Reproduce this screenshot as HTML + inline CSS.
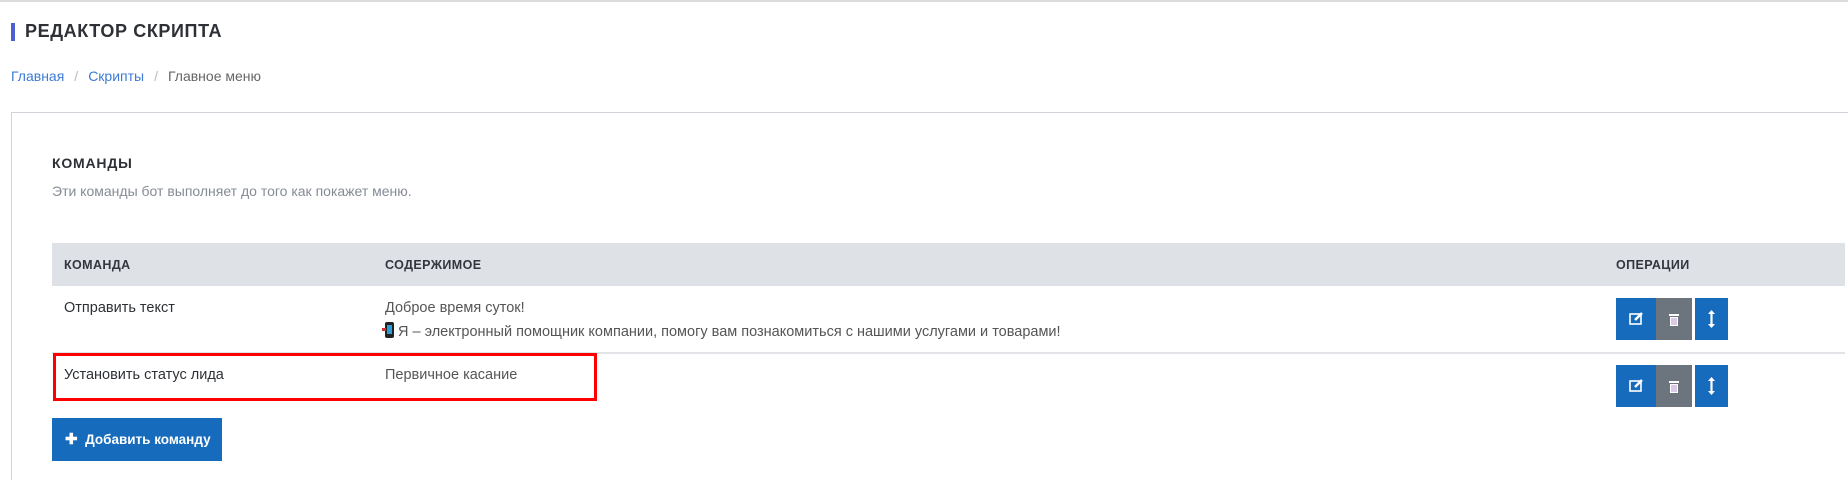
<!DOCTYPE html>
<html><head><meta charset="utf-8"><style>
*{margin:0;padding:0;box-sizing:border-box}
body{width:1848px;height:480px;overflow:hidden;background:#fff;font-family:"Liberation Sans",sans-serif;position:relative;color:#343a40}
.a{position:absolute;white-space:nowrap}
.btn{position:absolute;height:42px;top:0}
.sep{margin:0 10px;color:#bbb}
</style></head><body>
<div class="a" style="left:0;top:0;width:1848px;height:2px;background:#dcdcdc"></div>
<div class="a" style="left:11px;top:23px;width:4px;height:18px;background:#4a5fd0"></div>
<div class="a" style="left:25px;top:21px;font-size:18px;font-weight:bold;letter-spacing:0.6px;color:#2d3035">РЕДАКТОР СКРИПТА</div>
<div class="a" style="left:11px;top:68px;font-size:14px;color:#bbb"><span style="color:#3d7bd6">Главная</span><span class="sep">/</span><span style="color:#3d7bd6">Скрипты</span><span class="sep">/</span><span style="color:#666">Главное меню</span></div>
<div class="a" style="left:11px;top:112px;width:1837px;height:368px;border-left:1px solid #d0d4da;border-top:1px solid #d0d4da"></div>
<div class="a" style="left:52px;top:155px;font-size:14px;font-weight:bold;letter-spacing:0.8px;color:#2d3035">КОМАНДЫ</div>
<div class="a" style="left:52px;top:183px;font-size:14px;color:#858b95">Эти команды бот выполняет до того как покажет меню.</div>
<div class="a" style="left:52px;top:243px;width:1793px;height:43px;background:#dee1e5"></div>
<div class="a" style="left:64px;top:258px;font-size:12.5px;font-weight:bold;letter-spacing:0.4px;color:#33373d">КОМАНДА</div>
<div class="a" style="left:385px;top:258px;font-size:12.5px;font-weight:bold;letter-spacing:0.4px;color:#33373d">СОДЕРЖИМОЕ</div>
<div class="a" style="left:1616px;top:258px;font-size:12.5px;font-weight:bold;letter-spacing:0.4px;color:#33373d">ОПЕРАЦИИ</div>
<div class="a" style="left:64px;top:300px;font-size:14.5px;color:#2d3035">Отправить текст</div>
<div class="a" style="left:385px;top:300px;font-size:14.5px;color:#555">Доброе время суток!</div>
<div class="a" style="left:385px;top:322px;font-size:14.5px;color:#555"><span style="display:inline-block;width:9px;height:16px;background:#222;border-radius:2px;vertical-align:-2px;position:relative"><span style="position:absolute;left:2px;top:3px;width:5px;height:9px;background:#2a9fd8"></span><span style="position:absolute;left:-3px;top:6px;width:4px;height:3px;background:#c33"></span></span> Я – электронный помощник компании, помогу вам познакомиться с нашими услугами и товарами!</div>
<div class="a" style="left:52px;top:352px;width:1793px;height:2px;background:#e2e4e7"></div>
<div class="a" style="left:64px;top:367px;font-size:14.5px;color:#2d3035">Установить статус лида</div>
<div class="a" style="left:385px;top:367px;font-size:14.5px;color:#555">Первичное касание</div>
<div class="a" style="left:53px;top:353px;width:544px;height:48px;border:3px solid #f00"></div>
<div class="a" style="left:1616px;top:298px;width:112px;height:42px">
<div class="btn" style="left:0;width:40px;background:#176bbd"><svg width="40" height="42"><rect x="14" y="16" width="11" height="10" fill="none" stroke="#fff" stroke-width="1.6"/><path d="M19 22 L26 15" stroke="#fff" stroke-width="2.5"/></svg></div>
<div class="btn" style="left:40px;width:36px;background:#6c757d"><svg width="36" height="42"><rect x="13" y="16" width="10" height="2" fill="#fff"/><rect x="14" y="19" width="8" height="9" fill="#fff"/><path d="M16 20v7M18 20v7M20 20v7" stroke="#b08ac8" stroke-width="0.9"/></svg></div>
<div class="btn" style="left:79px;width:33px;background:#176bbd"><svg width="33" height="42"><path d="M16.5 13v16" stroke="#fff" stroke-width="2.2"/><path d="M13 16l3.5-4 3.5 4zM13 26l3.5 4 3.5-4z" fill="#fff"/></svg></div>
</div>
<div class="a" style="left:1616px;top:365px;width:112px;height:42px">
<div class="btn" style="left:0;width:40px;background:#176bbd"><svg width="40" height="42"><rect x="14" y="16" width="11" height="10" fill="none" stroke="#fff" stroke-width="1.6"/><path d="M19 22 L26 15" stroke="#fff" stroke-width="2.5"/></svg></div>
<div class="btn" style="left:40px;width:36px;background:#6c757d"><svg width="36" height="42"><rect x="13" y="16" width="10" height="2" fill="#fff"/><rect x="14" y="19" width="8" height="9" fill="#fff"/><path d="M16 20v7M18 20v7M20 20v7" stroke="#b08ac8" stroke-width="0.9"/></svg></div>
<div class="btn" style="left:79px;width:33px;background:#176bbd"><svg width="33" height="42"><path d="M16.5 13v16" stroke="#fff" stroke-width="2.2"/><path d="M13 16l3.5-4 3.5 4zM13 26l3.5 4 3.5-4z" fill="#fff"/></svg></div>
</div>
<div class="a" style="left:52px;top:418px;width:170px;height:43px;background:#176bbd;color:#fff;font-size:13.5px;font-weight:bold;line-height:43px;padding-left:13px;overflow:hidden"><span style="font-size:15px;vertical-align:0">✚</span>&nbsp; Добавить команду</div>
</body></html>
